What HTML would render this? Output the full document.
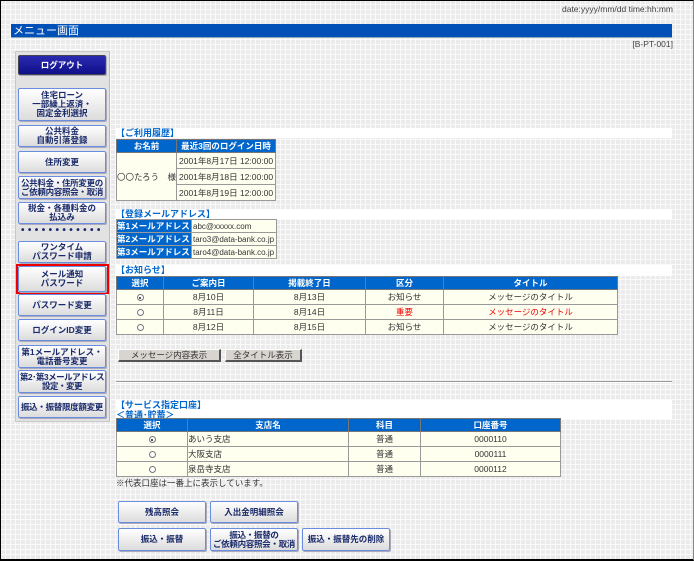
<!DOCTYPE html>
<html><head><meta charset="utf-8">
<style>
*{margin:0;padding:0;box-sizing:border-box}
body{width:694px;height:561px;overflow:hidden;position:relative;font-family:"Liberation Sans","Noto Sans CJK JP",sans-serif;font-size:9px;color:#333;background:#ebebeb}
.bg{position:absolute;left:0;top:0;width:694px;height:561px;background-color:#ebebeb;
background-image:linear-gradient(90deg,#fafafa 1px,transparent 1px),linear-gradient(0deg,#fafafa 1px,transparent 1px);
background-size:5px 5px}
.frame{position:absolute;left:0;top:0;width:694px;height:561px;border:1px solid #000;border-right-color:#888;border-bottom:2px solid #000;z-index:50;pointer-events:none}
.a{position:absolute}
.title{left:11px;top:24px;width:661px;height:14px;background:#0050b8;color:#fff;font-size:11px;line-height:14px;padding-left:2px;border-bottom:1px solid #8ab}
.side{left:15px;top:51px;width:95px;height:371px;background:#e2e2e2;border:1px solid #c8c8c8;border-right-color:#bbb}
.b{position:absolute;border:1px solid #6b8de0;border-radius:2px;background:linear-gradient(#fff,#dcdcdc);color:#1a2a6a;font-weight:bold;font-size:8.5px;line-height:9px;text-align:center;display:flex;align-items:center;justify-content:center;box-shadow:1px 1px 0 #aab;white-space:nowrap}
.band{position:absolute;left:116px;width:556px;background:#fff;color:#0066cc;font-weight:bold;font-size:9px;line-height:10px}
table{position:absolute;border-collapse:collapse;background:#fffff0;border:1px solid #777}
td,th{border:1px solid #999;font-size:8.5px;font-weight:normal;padding:0 2px;white-space:nowrap}
th{background:#0066cc;color:#fff;font-weight:bold;text-align:center;border-color:#777}
.c{text-align:center}
.rd{text-align:center}
.rd i{display:inline-block;width:7px;height:7px;border-radius:50%;border:1px solid #777;background:#fff;vertical-align:middle;position:relative}
.rd i.on::after{content:"";position:absolute;left:1.5px;top:1.5px;width:2px;height:2px;border-radius:50%;background:#222}
.lab{background:#0066cc;color:#fff;font-weight:bold}
.r{color:#e00}
.gb{position:absolute;top:349px;height:13px;background:#d8d4cf;border:1px solid #fff;border-right:2px solid #555;border-bottom:2px solid #555;font-size:8.5px;line-height:10px;text-align:center}
</style></head><body>
<div class="bg"></div>
<div class="frame"></div>
<div class="a" style="right:21px;top:4px;font-size:8.5px;color:#444">date:yyyy/mm/dd time:hh:mm</div>
<div class="a title">メニュー画面</div>
<div class="a" style="right:21px;top:39px;font-size:8.5px;color:#444">[B-PT-001]</div>

<div class="a side"></div>
<div class="b" style="left:18px;top:55px;width:88px;height:20px;background:linear-gradient(#2a2ab0,#10108a);color:#fff;border-color:#445">ログアウト</div>
<div class="b" style="left:18px;top:88px;width:88px;height:33px">住宅ローン<br>一部繰上返済・<br>固定金利選択</div>
<div class="b" style="left:18px;top:125px;width:88px;height:22px">公共料金<br>自動引落登録</div>
<div class="b" style="left:18px;top:151px;width:88px;height:22px">住所変更</div>
<div class="b" style="left:18px;top:176px;width:88px;height:23px;letter-spacing:-0.3px">公共料金・住所変更の<br>ご依頼内容照会・取消</div>
<div class="b" style="left:18px;top:202px;width:88px;height:22px">税金・各種料金の<br>払込み</div>
<div class="a" style="left:21px;top:225px;width:88px;color:#1a2a6a;font-size:10px;letter-spacing:3.4px;font-weight:bold">••••••••••••</div>
<div class="b" style="left:18px;top:241px;width:88px;height:22px">ワンタイム<br>パスワード申請</div>
<div class="a" style="left:16px;top:264px;width:93px;height:30px;border:2px solid #e00"></div>
<div class="b" style="left:18px;top:266px;width:88px;height:26px">メール通知<br>パスワード</div>
<div class="b" style="left:18px;top:294px;width:88px;height:22px">パスワード変更</div>
<div class="b" style="left:18px;top:319px;width:88px;height:22px">ログインID変更</div>
<div class="b" style="left:18px;top:345px;width:88px;height:23px">第1メールアドレス・<br>電話番号変更</div>
<div class="b" style="left:18px;top:370px;width:88px;height:23px;letter-spacing:-0.5px">第2･第3メールアドレス<br>設定・変更</div>
<div class="b" style="left:18px;top:396px;width:88px;height:22px;letter-spacing:-0.3px">振込・振替限度額変更</div>

<div class="band" style="top:128px;height:10px">【ご利用履歴】</div>
<table style="left:116px;top:139px;width:157px">
<tr style="height:12px"><th style="width:56px">お名前</th><th>最近3回のログイン日時</th></tr>
<tr style="height:16px"><td rowspan="3" style="padding:0">〇〇たろう　様</td><td>2001年8月17日 12:00:00</td></tr>
<tr style="height:16px"><td>2001年8月18日 12:00:00</td></tr>
<tr style="height:16px"><td>2001年8月19日 12:00:00</td></tr>
</table>

<div class="band" style="top:209px;height:10px">【登録メールアドレス】</div>
<table style="left:116px;top:219px;width:161px">
<tr style="height:12px"><td class="lab" style="width:75px;padding:0">第1メールアドレス</td><td style="font-size:8px;padding:0 1px">abc@xxxxx.com</td></tr>
<tr style="height:12px"><td class="lab" style="padding:0">第2メールアドレス</td><td style="font-size:8px;padding:0 1px">taro3@data-bank.co.jp</td></tr>
<tr style="height:12px"><td class="lab" style="padding:0">第3メールアドレス</td><td style="font-size:8px;padding:0 1px">taro4@data-bank.co.jp</td></tr>
</table>

<div class="band" style="top:265px;height:11px">【お知らせ】</div>
<table style="left:116px;top:276px;width:502px">
<tr style="height:12px"><th style="width:47px">選択</th><th style="width:90px">ご案内日</th><th style="width:112px">掲載終了日</th><th style="width:78px">区分</th><th>タイトル</th></tr>
<tr style="height:15px"><td class="rd"><i class="on"></i></td><td class="c">8月10日</td><td class="c">8月13日</td><td class="c">お知らせ</td><td class="c">メッセージのタイトル</td></tr>
<tr style="height:15px"><td class="rd"><i></i></td><td class="c">8月11日</td><td class="c">8月14日</td><td class="c r">重要</td><td class="c r">メッセージのタイトル</td></tr>
<tr style="height:15px"><td class="rd"><i></i></td><td class="c">8月12日</td><td class="c">8月15日</td><td class="c">お知らせ</td><td class="c">メッセージのタイトル</td></tr>
</table>

<div class="gb" style="left:118px;width:103px">メッセージ内容表示</div>
<div class="gb" style="left:225px;width:77px">全タイトル表示</div>

<div class="a" style="left:116px;top:381px;width:556px;height:2px;border-top:1px solid #999;border-bottom:1px solid #fff"></div>

<div class="band" style="top:400px;height:19px">【サービス指定口座】<br>＜普通･貯蓄＞</div>
<table style="left:116px;top:418px;width:445px">
<tr style="height:12px"><th style="width:71px">選択</th><th style="width:161px">支店名</th><th style="width:72px">科目</th><th>口座番号</th></tr>
<tr style="height:15px"><td class="rd"><i class="on"></i></td><td style="padding:0">あいう支店</td><td class="c">普通</td><td class="c">0000110</td></tr>
<tr style="height:15px"><td class="rd"><i></i></td><td style="padding:0">大阪支店</td><td class="c">普通</td><td class="c">0000111</td></tr>
<tr style="height:15px"><td class="rd"><i></i></td><td style="padding:0">泉岳寺支店</td><td class="c">普通</td><td class="c">0000112</td></tr>
</table>
<div class="a" style="left:116px;top:477px;font-size:8.5px;color:#333">※代表口座は一番上に表示しています。</div>

<div class="b" style="left:118px;top:501px;width:88px;height:22px">残高照会</div>
<div class="b" style="left:210px;top:501px;width:88px;height:22px">入出金明細照会</div>
<div class="b" style="left:118px;top:528px;width:88px;height:23px">振込・振替</div>
<div class="b" style="left:210px;top:528px;width:88px;height:23px;letter-spacing:-0.3px">振込・振替の<br>ご依頼内容照会・取消</div>
<div class="b" style="left:302px;top:528px;width:88px;height:23px">振込・振替先の削除</div>
</body></html>
